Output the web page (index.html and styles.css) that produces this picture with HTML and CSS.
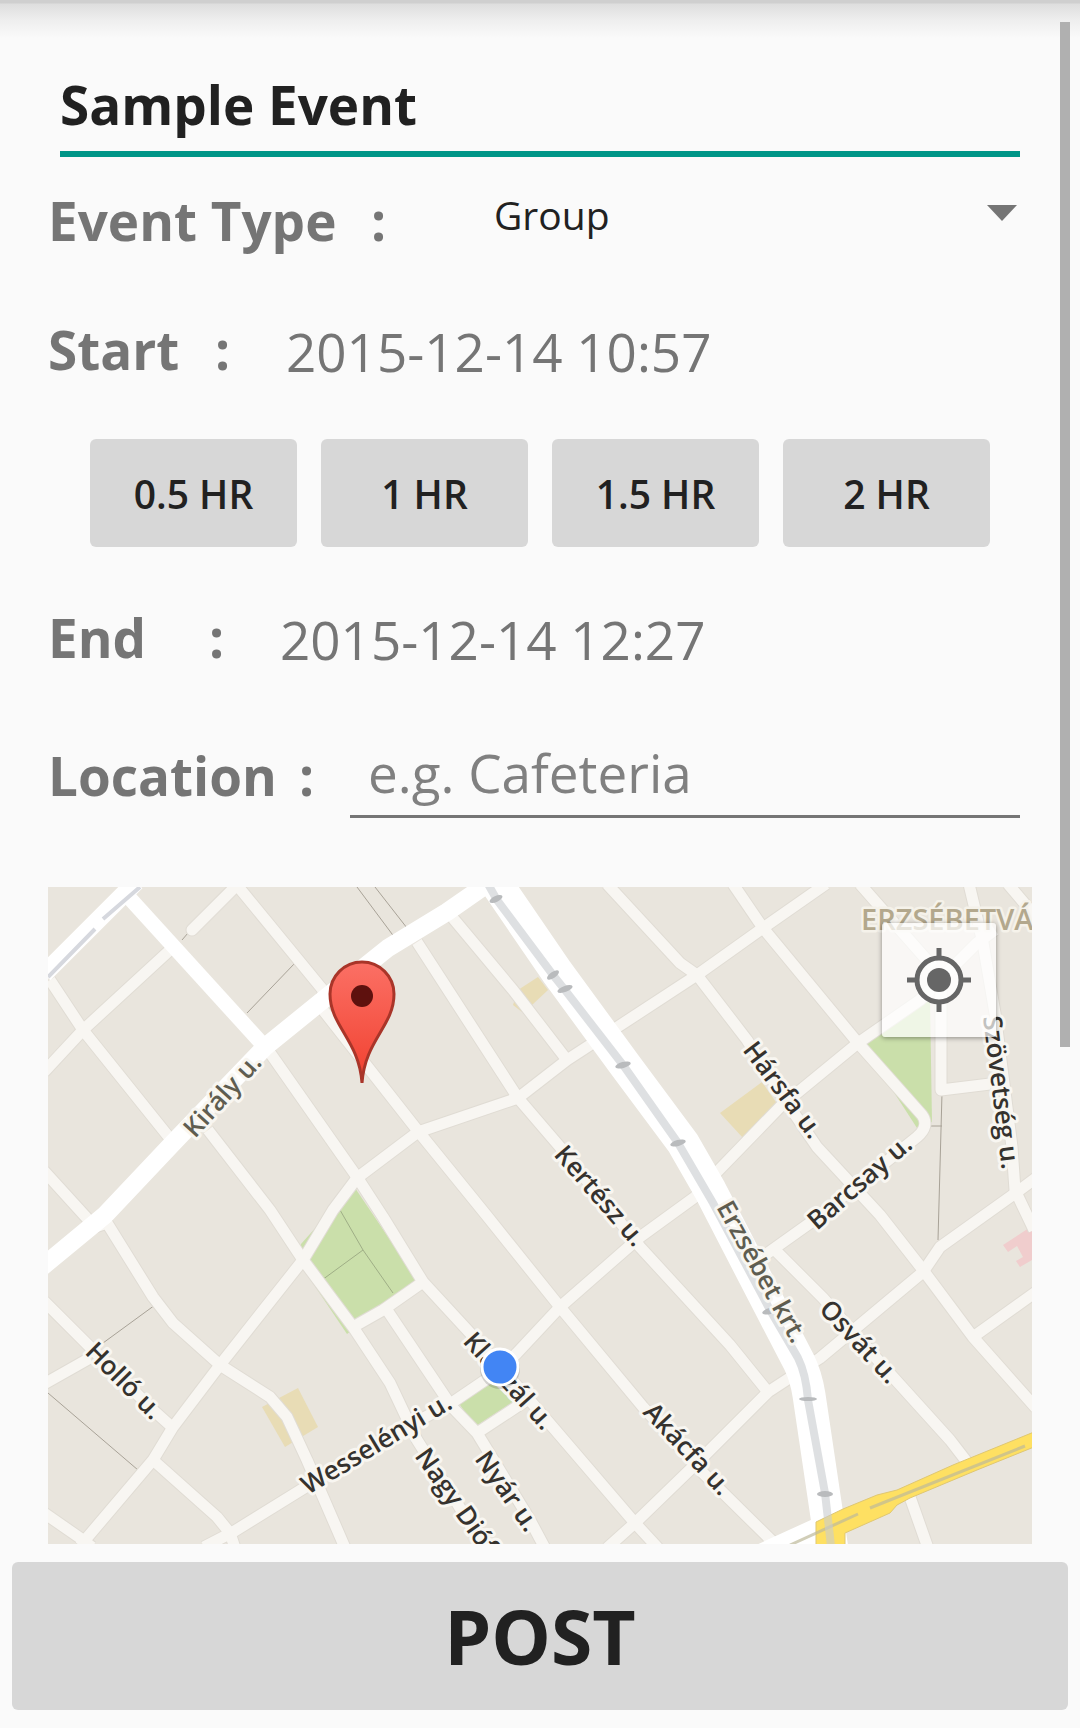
FILE: index.html
```html
<!DOCTYPE html>
<html lang="en">
<head>
<meta charset="utf-8">
<meta name="viewport" content="width=device-width, initial-scale=1">
<title>Sample Event</title>
<link rel="stylesheet" href="styles.css">
</head>
<body>
<div class="scroll-thumb"></div>
<form class="event-form">
  <div class="fields">
    <input class="title-input" type="text" value="Sample Event" aria-label="Event title">

    <div class="row row-type">
      <label class="label" for="type"><span>Event Type</span><span>:</span></label>
      <div class="select-wrap">
        <select class="select" id="type"><option>Group</option><option>Private</option></select>
        <svg class="caret" viewBox="0 0 30 16" aria-hidden="true"><path d="M0 0H30L15 16Z" fill="#757575"/></svg>
      </div>
    </div>

    <div class="row row-start">
      <label class="label" for="start"><span>Start</span><span>:</span></label>
      <input class="date" id="start" type="text" value="2015-12-14 10:57">
    </div>

    <div class="durations">
      <button class="duration" type="button">0.5 HR</button>
      <button class="duration" type="button">1 HR</button>
      <button class="duration" type="button">1.5 HR</button>
      <button class="duration" type="button">2 HR</button>
    </div>

    <div class="row row-end">
      <label class="label" for="end"><span>End</span><span>:</span></label>
      <input class="date" id="end" type="text" value="2015-12-14 12:27">
    </div>

    <div class="row row-location">
      <label class="label" for="location"><span>Location</span><span>:</span></label>
      <input class="location" id="location" type="text" placeholder="e.g. Cafeteria">
    </div>

    <div class="map">
      <svg class="map-canvas" viewBox="48 887 984 657" role="img" aria-label="Map">
        <defs>
          <linearGradient id="pin" x1="0" y1="0" x2="0" y2="1">
            <stop offset="0" stop-color="#fb7065"/><stop offset="1" stop-color="#f1402f"/>
          </linearGradient>
          <g id="streets">
            <path stroke-linecap="round" d="M238 884L192 930"/>
            <path d="M170 950L83 1030L44 1072"/>
            <path d="M50 980L83 1030L172 1141"/>
            <path d="M208 1130L270 1210L303 1260L353 1327L390 1383L417 1440L457 1503L485 1550"/>
            <path d="M236 884L323 990V1010L418 1131L487 1216L560 1307L643 1407L700 1470L775 1544"/>
            <path d="M268 1050L357 1177L383 1217L423 1282L470 1333L527 1397L635 1523L658 1548"/>
            <path d="M44 1171L95 1227L107 1223L153 1297L173 1323L220 1365L270 1397L287 1417L307 1460L346 1550"/>
            <path d="M80 1546L153 1460L173 1427L220 1365L303 1260L333 1210L357 1178L418 1132L518 1098L567 1060L613 1030L697 975L763 928L826 884"/>
            <path d="M417 942L518 1098L560 1147L640 1247L730 1345L768 1392"/>
            <path d="M452 917L513 990L567 1060"/>
            <path d="M204 1547L233 1532L317 1480L407 1427L453 1402L500 1370L517 1353L560 1307L640 1237L695 1197L717 1172L780 1107L858 1043L920 1000L977 943L995 930"/>
            <path d="M353 1327L383 1310L423 1282M387 1310L452 1407L477 1433L530 1520L546 1550M477 1433L527 1400"/>
            <path d="M607 1548L635 1523L700 1460L768 1392L820 1358L850 1333L923 1272L940 1247L1017 1192L1036 1178"/>
            <path d="M733 884L763 928L858 1043L922 1115Q930 1126 917 1137L810 1223L765 1255"/>
            <path d="M607 884L680 963L697 975L747 1040L783 1097L817 1147L880 1215L923 1270L973 1337L1036 1408"/>
            <path d="M973 1337L1036 1292M775 1250L823 1298L893 1377L950 1440L967 1462"/>
            <path d="M860 884L933 967M969 884L983 943L995 1013L1012 1147L1015 1190L1034 1230M1008 884L1036 917"/>
            <path d="M941 990V1090L990 1084"/>
            <path d="M44 1301L90 1347L153 1410L172 1427M44 1384L90 1358M153 1460L217 1517L230 1533L235 1548M44 1513L83 1540L92 1547M910 1497L928 1548"/>
          </g>
        </defs>
        <rect x="48" y="887" width="984" height="657" fill="#e9e5dd"/>

        <!-- parks -->
        <g fill="#cadfaa">
          <path d="M355 1188L418 1281L347 1334L296 1258Z"/>
          <path d="M327 1215L301 1244L296 1260L312 1258Z"/>
          <path d="M458 1402L493 1383L513 1402L475 1427Z"/>
          <path d="M862 1043L930 1000L932 1122L917 1128Z"/>
        </g>
        <!-- buildings -->
        <g fill="#e8dcb5">
          <path d="M513 1005L518 990L538 977L548 990L532 1005L522 1012Z"/>
          <path d="M720 1113L762 1082L778 1105L743 1138Z"/>
          <path d="M262 1407L298 1388L318 1427L285 1447Z"/>
        </g>
        <path fill="#f0cdcd" d="M1003 1245L1032 1226V1260L1020 1267L1016 1261L1023 1257L1017 1246L1008 1252Z"/>

        <!-- footpaths -->
        <g fill="none" stroke="#a8a297" stroke-width="1">
          <path d="M942 1093L938 1240M930 1126H942M295 963L247 1013M182 940L188 933M357 887L395 938M375 887L407 928M103 1343L155 1305M48 1393L138 1470"/>
          <path d="M340 1210L363 1250L393 1293M322 1280L363 1250" stroke="#9fae86"/>
        </g>

        <!-- side streets: edge, then surface -->
        <use href="#streets" class="street-edge"/>
        <use href="#streets" class="street-surface"/>

        <!-- main roads -->
        <g fill="none" stroke="#ffffff" stroke-linejoin="round">
          <path stroke-width="18" d="M136 882L44 974"/>
          <path stroke-width="15" d="M124 892L265 1047"/>
          <path stroke-width="18" d="M42 1267L105 1215L173 1143L265 1047L323 1000L388 948L447 912L490 882"/>
          <path stroke-width="33" d="M494 880L557 972L625 1065L683 1143L710 1190L772 1310L799 1362Q806 1376 809 1395L832 1550"/>
        </g>
        <path fill="#ffffff" d="M754 1546L813 1519L820 1546Z"/>
        <path d="M140 887L103 919M95 929L48 977" stroke="#d6d8de" stroke-width="4" fill="none"/>
        <path fill="#fee062" stroke="#dfc772" stroke-width="1" d="M816 1522L843 1509L877 1495L897 1490L953 1465L1034 1432V1447L977 1470L910 1498L897 1505L890 1513L845 1533V1546H816Z"/>
        <path d="M790 1545L858 1514M870 1508L1025 1446" stroke="#bdb99a" stroke-opacity=".7" stroke-width="3" fill="none"/>
        <!-- tram line -->
        <path d="M488 884L497 900L553 975L565 990L623 1065L678 1143L713 1203L770 1310L798 1358Q806 1374 808 1400L825 1493L831 1546" stroke="#c8ccce" stroke-opacity=".6" stroke-width="8" fill="none"/>
        <g fill="#b9bbbd">
          <ellipse cx="496" cy="899" rx="7" ry="3" transform="rotate(-25 496 899)"/>
          <ellipse cx="553" cy="975" rx="7" ry="3" transform="rotate(-35 553 975)"/>
          <ellipse cx="565" cy="989" rx="8" ry="3" transform="rotate(-20 565 989)"/>
          <ellipse cx="623" cy="1065" rx="8" ry="3" transform="rotate(-15 623 1065)"/>
          <ellipse cx="678" cy="1143" rx="8" ry="3" transform="rotate(-15 678 1143)"/>
          <ellipse cx="770" cy="1311" rx="8" ry="3" transform="rotate(-15 770 1311)"/>
          <ellipse cx="808" cy="1399" rx="9" ry="2"/>
          <ellipse cx="825" cy="1494" rx="8" ry="3"/>
        </g>

        <!-- street names -->
        <g class="street-name">
          <text class="on-main" transform="translate(195 1139) rotate(-48)">Király u.</text>
          <text transform="translate(553 1155) rotate(49)">Kertész u.</text>
          <text class="on-main" transform="translate(716 1207) rotate(61)">Erzsébet krt.</text>
          <text transform="translate(742 1050) rotate(53)">Hársfa u.</text>
          <text transform="translate(817 1231) rotate(-41)">Barcsay u.</text>
          <text transform="translate(818 1310) rotate(47)">Osvát u.</text>
          <text transform="translate(983 1017) rotate(83)">Szövetség u.</text>
          <text transform="translate(84 1353) rotate(45)">Holló u.</text>
          <text transform="translate(308 1495) rotate(-31)">Wesselényi u.</text>
          <text transform="translate(462 1342) rotate(48)">Klauzál u.</text>
          <text transform="translate(414 1456) rotate(55)">Nagy Diófa u.</text>
          <text transform="translate(474 1459) rotate(55)">Nyár u.</text>
          <text transform="translate(642 1413) rotate(47)">Akácfa u.</text>
        </g>
        <text class="district" x="861" y="930">ERZSÉBETVÁROS</text>

        <!-- event pin and current position -->
        <path d="M362 1083C359 1040 330 1026 330 994A32 32 0 0 1 394 994C394 1026 365 1040 362 1083Z" fill="url(#pin)" stroke="#a93529" stroke-width="3"/>
        <circle cx="362" cy="996" r="11" fill="#5e110e"/>
        <circle cx="500" cy="1369" r="20" fill="#000000" fill-opacity=".15"/>
        <circle cx="500" cy="1367" r="18" fill="#4285f4" stroke="#ffffff" stroke-width="3"/>
      </svg>
      <button class="locate" type="button" aria-label="My location">
        <svg class="locate-icon" viewBox="0 0 64 64" fill="none" stroke="#666666" stroke-width="5" aria-hidden="true">
          <circle cx="32" cy="32" r="22" fill="#ffffff" fill-opacity=".6"/>
          <circle cx="32" cy="32" r="12" fill="#666666" stroke="none"/>
          <path d="M32 0V10M32 54V64M0 32H10M54 32H64"/>
        </svg>
      </button>
    </div>
  </div>
  <button class="post" type="submit">POST</button>
</form>
</body>
</html>
```
FILE: styles.css
```css
* {
  box-sizing: border-box;
}

body {
  margin: 0;
  position: relative;
  background: #fafafa;
  color: #212121;
  font-family: "Open Sans", "Noto Sans", sans-serif;
}

input,
select,
button {
  margin: 0;
  padding: 0;
  border: 0;
  border-radius: 0;
  outline: 0;
  background: transparent;
  color: inherit;
  font-family: inherit;
  min-width: 0;
}

.scroll-thumb {
  position: absolute;
  top: 22px;
  right: 10px;
  width: 10px;
  height: 1025px;
  background: #b0b0b0;
}

.event-form {
  display: flex;
  flex-direction: column;
  gap: 18px;
  padding: 72px 12px 18px;
  background: linear-gradient(#cfcfcf 0, #cfcfcf 3px, #dedede 4px, #eeeeee 20px, #fafafa 38px);
}

.fields {
  display: flex;
  flex-direction: column;
  padding: 0 36px;
}

.title-input {
  margin: 0 12px 32px;
  padding-bottom: 15px;
  border-bottom: 6px solid #009688;
  font-size: 53px;
  font-weight: 700;
  line-height: 64px;
  height: 85px;
}

.row {
  display: flex;
  align-items: flex-start;
}

.label {
  display: flex;
  flex: none;
  justify-content: space-between;
  color: #757575;
  font-size: 53px;
  font-weight: 700;
  line-height: 64px;
}

.row-type .label { width: 338px; }
.row-start .label { width: 182px; }
.row-end .label { width: 176px; }
.row-location .label { width: 266px; }

.row-type {
  gap: 108px;
  margin-bottom: 65px;
}

.select-wrap {
  position: relative;
  flex: 1;
  margin-right: 12px;
}

.select {
  appearance: none;
  width: 100%;
  height: 52px;
  font-size: 39px;
  line-height: 52px;
}

.caret {
  position: absolute;
  top: 16px;
  right: 3px;
  width: 30px;
  height: 16px;
  pointer-events: none;
}

.row-start {
  gap: 56px;
  margin-bottom: 57px;
}

.row-end {
  gap: 56px;
  margin-bottom: 74px;
}

.date {
  flex: 1;
  height: 68px;
  margin-bottom: -4px;
  color: #757575;
  font-size: 53px;
  line-height: 68px;
}

.durations {
  display: grid;
  grid-template-columns: repeat(4, 1fr);
  gap: 24px;
  margin: 0 42px 59px;
}

.duration {
  height: 108px;
  border-radius: 6px;
  background: #d7d7d7;
  font-size: 39px;
  font-weight: 600;
}

.row-location {
  gap: 36px;
  margin-bottom: 69px;
}

.location {
  flex: 1;
  height: 74px;
  margin-right: 12px;
  padding: 0 18px 15px;
  border-bottom: 3px solid #757575;
  font-size: 53px;
  line-height: 56px;
}

.location::placeholder {
  color: #808080;
  opacity: 1;
}

.map {
  position: relative;
  overflow: hidden;
}

.map-canvas {
  display: block;
  width: 100%;
}

.street-edge,
.street-surface {
  fill: none;
  stroke-linejoin: round;
}

.street-edge {
  stroke: #e0dcd4;
  stroke-width: 13px;
}

.street-surface {
  stroke: #f8f6f2;
  stroke-width: 11px;
}

.street-name {
  fill: #35322e;
  font-size: 26px;
  font-weight: 600;
  stroke: #f8f6f1;
  stroke-width: 6px;
  stroke-linejoin: round;
  paint-order: stroke;
}

.on-main {
  fill: #5f5d50;
}

.district {
  fill: #b3a88d;
  font-size: 29px;
  font-weight: 600;
  stroke: #f5f2ea;
  stroke-width: 5px;
  stroke-linejoin: round;
  paint-order: stroke;
}

.locate {
  position: absolute;
  top: 36px;
  right: 36px;
  display: grid;
  place-items: center;
  width: 114px;
  height: 114px;
  border-radius: 3px;
  background: rgba(255, 255, 255, 0.7);
  box-shadow: 0 1px 5px rgba(0, 0, 0, 0.4);
}

.locate-icon {
  width: 64px;
  height: 64px;
}

.post {
  height: 148px;
  border-radius: 6px;
  background: #d7d7d7;
  font-size: 75px;
  font-weight: 700;
}
```
